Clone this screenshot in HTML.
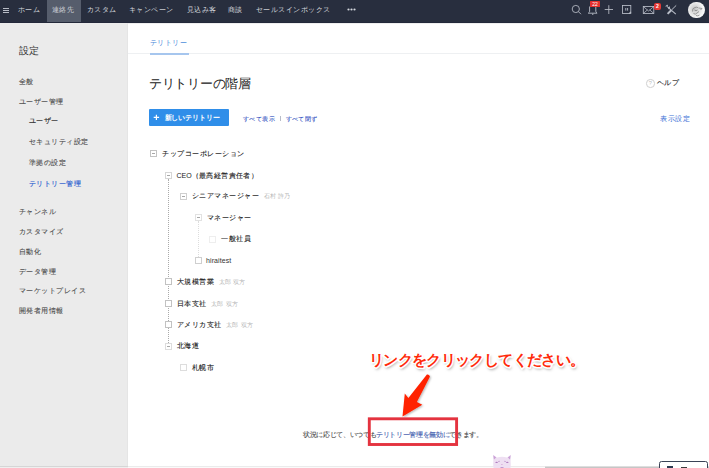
<!DOCTYPE html>
<html><head><meta charset="utf-8">
<style>
*{margin:0;padding:0;box-sizing:border-box}
html,body{width:709px;height:468px;overflow:hidden;background:#fff;font-family:"Liberation Sans",sans-serif;color:#333}
.a{position:absolute;white-space:nowrap;line-height:1}
#nav{position:absolute;left:0;top:0;width:709px;height:23px;background:#282e3e;z-index:2;border-bottom:1px solid #23283a}
#nav .t{position:absolute;top:6px;font-size:7px;letter-spacing:0.45px;color:#d3d6dc;line-height:1;white-space:nowrap}
#act{position:absolute;left:47px;top:0;width:34px;height:22px;background:#565d6c}
#side{position:absolute;left:0;top:22px;width:128px;height:446px;background:#ebebeb}
.s{position:absolute;font-size:7px;letter-spacing:0.45px;color:#4d4d4d;-webkit-text-stroke:0.1px #4d4d4d;line-height:1;white-space:nowrap}
.box{position:absolute;width:7px;height:7px;border:1px solid #c2c2c2;background:#fff}
.box.m::after{content:"";position:absolute;left:1px;top:2px;width:3px;height:1px;background:#a8a8a8}
.tr{position:absolute;font-size:7px;letter-spacing:0.5px;color:#1a1a1a;-webkit-text-stroke:0.12px #1a1a1a;line-height:1;white-space:nowrap}
.g{color:#b4b4b4;font-size:6px;margin-left:4.5px;letter-spacing:0.3px;-webkit-text-stroke:0}
.dl{position:absolute;width:0;border-left:1px dotted #aaa}
</style></head><body>
<div id="nav">
  <div id="act"></div>
  <div style="position:absolute;left:3px;top:7.7px;width:6px;height:0.9px;background:#b8bcc6"></div>
  <div style="position:absolute;left:3px;top:9.7px;width:6px;height:0.9px;background:#b8bcc6"></div>
  <div style="position:absolute;left:3px;top:11.7px;width:6px;height:0.9px;background:#b8bcc6"></div>
  <div class="t" style="left:18px">ホーム</div>
  <div class="t" style="left:52px">連絡先</div>
  <div class="t" style="left:87px">カスタム</div>
  <div class="t" style="left:129px">キャンペーン</div>
  <div class="t" style="left:187px">見込み客</div>
  <div class="t" style="left:228px">商談</div>
  <div class="t" style="left:256px">セールスインボックス</div>
  <svg style="position:absolute;left:347px;top:8px" width="10" height="4"><circle cx="1.5" cy="1.5" r="1.1" fill="#d3d6dc"/><circle cx="4.5" cy="1.5" r="1.1" fill="#d3d6dc"/><circle cx="7.5" cy="1.5" r="1.1" fill="#d3d6dc"/></svg>
  <svg style="position:absolute;left:560px;top:0" width="149" height="22" fill="none" stroke="#b9bec8" stroke-width="0.85">
    <!-- search -->
    <circle cx="15.8" cy="9" r="3.6"/><path d="M18.5 11.7 L21 14.2"/>
    <!-- bell -->
    <path d="M29.6 6.5 L29.6 11.3 Q29.6 12.3 28.3 13.2 L37.1 13.2 Q35.8 12.3 35.8 11.3 L35.8 6.5" stroke-width="0.9"/><path d="M32 14.2 L33.4 14.2" stroke-width="1"/>
    <!-- plus -->
    <path d="M44.7 9.5 L53 9.5 M48.8 5.2 L48.8 14"/>
    <!-- note -->
    <rect x="62.5" y="5.5" width="8.3" height="8"/><path d="M65.8 8 L65.8 10.6 M67.6 8 L67.6 10.6" stroke-width="0.9"/><path d="M69.2 13.6 L70.9 11.9" stroke-width="1.2"/>
    <!-- mail -->
    <rect x="83.3" y="6.5" width="10.5" height="7"/><path d="M83.3 6.5 L88.55 11 L93.8 6.5 M83.3 13.5 L87.5 9.8 M93.8 13.5 L89.6 9.8" stroke-width="0.75"/>
    <!-- tools -->
    <path d="M107.8 7.2 L115.8 14.2" stroke-width="1.1"/><path d="M106 6.8 Q105.8 5 107.6 5.2 L107.2 6.6 L108.4 7.6 L109.5 6.8 Q110 8.8 108.2 8.8" stroke-width="0.9"/>
    <path d="M116.2 5.4 L111.5 10" stroke-width="1"/><path d="M111.2 10.3 L107.6 13.9" stroke-width="2"/>
  </svg>
  <div style="position:absolute;left:589.8px;top:1px;width:10.2px;height:6.2px;background:#e5302c;border-radius:0.5px;color:#fff;font-size:5px;line-height:6.2px;text-align:center;letter-spacing:-0.2px">22</div>
  <div style="position:absolute;left:654px;top:2.5px;width:7px;height:7px;background:#e53935;border-radius:2px;color:#fff;font-size:5px;font-weight:bold;line-height:7px;text-align:center">2</div>
  <div style="position:absolute;left:688.3px;top:1.8px;width:16.5px;height:16.5px;border-radius:50%;background:radial-gradient(circle at 40% 45%,#c4c4c4 0,#dcdcdc 30%,#f4f4f4 60%,#fdfdfd 80%)"></div><svg style="position:absolute;left:688px;top:2px" width="17" height="17" fill="none" stroke="#7a7a7a" stroke-width="0.7"><path d="M4.5 9.5 Q4 6 7 5.5 Q9 4.5 10.5 6 M5.5 11.5 Q7.5 13 9 11 L11 9.5 M6.5 8 Q8 9.5 9.5 8 M11 6 L14 6.5 L12.5 8 M8 13.5 Q10 14.5 11.5 13" /></svg>
</div>
<div style="position:absolute;left:0;top:23px;width:709px;height:1px;background:#eeeeee"></div>
<div id="side">
  <div class="s" style="left:19px;top:23.5px;letter-spacing:0;font-size:10px;color:#333;-webkit-text-stroke:0">設定</div>
  <div class="s" style="left:19px;top:56px">全般</div>
  <div class="s" style="left:19px;top:76px">ユーザー管理</div>
  <div class="s" style="left:29px;top:95px;letter-spacing:0.3px;color:#2e2e2e;-webkit-text-stroke:0.15px #2e2e2e">ユーザー</div>
  <div class="s" style="left:29px;top:116px">セキュリティ設定</div>
  <div class="s" style="left:29px;top:137px">準拠の設定</div>
  <div class="s" style="left:29px;top:158px;color:#2f62d0;-webkit-text-stroke:0.15px #2f62d0">テリトリー管理</div>
  <div class="s" style="left:19px;top:186px">チャンネル</div>
  <div class="s" style="left:19px;top:206px">カスタマイズ</div>
  <div class="s" style="left:19px;top:226px">自動化</div>
  <div class="s" style="left:19px;top:246px">データ管理</div>
  <div class="s" style="left:19px;top:265px">マーケットプレイス</div>
  <div class="s" style="left:19px;top:285px">開発者用情報</div>
</div>
<!-- main -->
<div class="a" style="left:150px;top:39px;font-size:7px;letter-spacing:0.4px;color:#4486d8">テリトリー</div>
<div style="position:absolute;left:128px;top:53.2px;width:581px;height:1px;background:#eef0f2"></div>
<div style="position:absolute;left:150px;top:53px;width:39px;height:1.6px;background:#a6c6ee"></div>
<div class="a" style="left:149px;top:77px;font-size:13px;letter-spacing:-0.3px;color:#222">テリトリーの階層</div>
<div style="position:absolute;left:646px;top:79px;width:8.5px;height:8.5px;border:1px solid #d0d0d0;border-radius:50%;font-size:5.5px;color:#bbb;text-align:center;line-height:6.5px">?</div>
<div class="a" style="left:657px;top:79px;font-size:7px;letter-spacing:0.3px;color:#222;-webkit-text-stroke:0.12px #222">ヘルプ</div>
<div style="position:absolute;left:149px;top:109px;width:80px;height:17px;background:#2f8ee9;border-radius:1px"></div>
<svg style="position:absolute;left:150px;top:110px" width="12" height="14"><path d="M3.7 7.3 L9.1 7.3 M6.4 4.8 L6.4 10" stroke="#fff" stroke-width="1.2"/></svg>
<div class="a" style="left:164.5px;top:113.5px;font-size:7px;letter-spacing:-0.12px;color:#fff;font-weight:bold">新しいテリトリー</div>
<div class="a" style="left:243px;top:115.5px;font-size:6px;letter-spacing:0.4px;color:#3451c2;-webkit-text-stroke:0.1px #3451c2">すべて表示</div>
<div class="a" style="left:279.8px;top:115.5px;width:0.8px;height:5.5px;background:#b8bcc8"></div>
<div class="a" style="left:285.5px;top:115.5px;font-size:6px;letter-spacing:0.4px;color:#3451c2;-webkit-text-stroke:0.1px #3451c2">すべて閉ず</div>
<div class="a" style="left:660px;top:114.5px;font-size:7px;letter-spacing:0.5px;color:#3b6fd6">表示設定</div>

<!-- tree -->
<div class="box m" style="left:150px;top:150px"></div>
<div class="tr" style="left:162px;top:150px">チップコーポレーション</div>
<div class="box m" style="left:165px;top:172px;border-color:#d6d6d6"></div>
<div class="tr" style="left:176.5px;top:172px;letter-spacing:0.4px"><span style="-webkit-text-stroke:0;color:#222;letter-spacing:0">CEO</span>（最高経営責任者）</div>
<div class="dl" style="left:168px;top:179px;height:164px"></div>
<div class="box m" style="left:180px;top:193px;border-color:#cfcfcf"></div>
<div class="tr" style="left:191.5px;top:192px">シニアマネージャー<span class="g">石村 許乃</span></div>
<div class="box m" style="left:195px;top:214px;border-color:#e2e2e2"></div>
<div class="tr" style="left:206.5px;top:214px">マネージャー</div>
<div class="dl" style="left:198px;top:221px;height:36px;border-color:#ddd"></div>
<div class="box" style="left:209px;top:235.5px;border-color:#eee"></div>
<div class="tr" style="left:221px;top:235px">一般社員</div>
<div class="box" style="left:195px;top:257px;border-color:#cfcfcf"></div>
<div class="tr" style="left:206px;top:256.5px;letter-spacing:0.1px;-webkit-text-stroke:0;color:#333">hiraitest</div>
<div class="box" style="left:165px;top:278px"></div>
<div class="tr" style="left:176.5px;top:278px">大規模営業<span class="g">太郎 双方</span></div>
<div class="box" style="left:165px;top:300px"></div>
<div class="tr" style="left:176.5px;top:299.5px">日本支社<span class="g">太郎 双方</span></div>
<div class="box" style="left:165px;top:321px"></div>
<div class="tr" style="left:176.5px;top:321px">アメリカ支社<span class="g">太郎 双方</span></div>
<div class="box m" style="left:165px;top:342.5px;border-color:#ddd"></div>
<div class="tr" style="left:176.5px;top:342px">北海道</div>
<div class="box" style="left:180px;top:364px;border-color:#ddd"></div>
<div class="tr" style="left:191.5px;top:363.5px">札幌市</div>

<!-- footer text -->
<div class="a" style="left:303px;top:430.5px;font-size:7px;letter-spacing:-0.35px;color:#484848;-webkit-text-stroke:0.1px #484848">状況に応じて、いつでも<span style="color:#3f5cae;-webkit-text-stroke:0.1px #3f5cae">テリトリー管理を無効に</span>できます。</div>

<!-- annotation -->
<div class="a" style="left:369px;top:352px;font-size:15px;letter-spacing:-0.65px;font-weight:bold;color:#fff;-webkit-text-stroke:3px #fff;text-shadow:1px 2px 3px rgba(0,0,0,.5)">リンクをクリックしてください。</div>
<div class="a" style="left:369px;top:352px;font-size:15px;letter-spacing:-0.65px;font-weight:bold;color:#ff2a0a">リンクをクリックしてください。</div>
<svg style="position:absolute;left:0;top:0" width="709" height="468">
  <defs><filter id="sh" x="-50%" y="-50%" width="200%" height="200%"><feGaussianBlur in="SourceAlpha" stdDeviation="0.8"/><feOffset dx="0.8" dy="1" result="b"/><feFlood flood-color="#000" flood-opacity="0.3"/><feComposite in2="b" operator="in"/><feMerge><feMergeNode/><feMergeNode in="SourceGraphic"/></feMerge></filter></defs>
  <path filter="url(#sh)" d="M426.9 374.6 Q428.6 373.9 429.8 376 Q430 376.8 429.5 377.5 L416.9 402.1 L422.3 404.8 L402.5 416.6 L404.8 393.5 L408.4 398 Z" fill="#ff2200"/>
  <rect x="369.3" y="418.8" width="87.3" height="25.7" fill="none" stroke="#e4333f" stroke-width="2.9"/>
</svg>

<!-- bottom -->
<div style="position:absolute;left:0;top:466px;width:128px;height:1px;background:#d6d6d6"></div>
<div style="position:absolute;left:0;top:467px;width:128px;height:1px;background:#efefef"></div>
<div style="position:absolute;left:128px;top:466px;width:417px;height:1px;background:#ebebeb"></div>
<div style="position:absolute;left:128px;top:467px;width:417px;height:1px;background:#fafafa"></div>
<div style="position:absolute;left:545px;top:466px;width:164px;height:1px;background:#dedede"></div>
<div style="position:absolute;left:545px;top:467px;width:164px;height:1px;background:#c6c6c6"></div>
<div style="position:absolute;left:127px;top:22px;width:1px;height:444px;background:#e5e5e5"></div>
<svg style="position:absolute;left:488px;top:450px" width="28" height="18">
  <path d="M5 4.8 L9 7.4 Q14 6.3 19 7.4 L22.9 4.8 L22.6 11 Q23 16 22.4 18 L5.6 18 Q5 16 5.3 11 Z" fill="#eedff2"/>
  <path d="M5.3 5.2 L8.2 7.6 L6 9.5 Z M22.6 5.2 L19.8 7.6 L22 9.5 Z" fill="#c9a0d6"/>
  <ellipse cx="8.6" cy="12.4" rx="1.2" ry="0.6" fill="#b07cc0"/><ellipse cx="19.3" cy="12.4" rx="1.2" ry="0.6" fill="#b07cc0"/>
  <path d="M10 11.5 L12 11.3 M16 11.3 L18 11.5" stroke="#b98cc8" stroke-width="0.6"/>
  <ellipse cx="13.9" cy="14.5" rx="0.8" ry="0.5" fill="#d6a8d8"/>
  <path d="M12.5 17.6 L15.5 17.6" stroke="#b07cc0" stroke-width="0.8"/>
</svg>
<div style="position:absolute;left:659.3px;top:460.7px;width:49px;height:12px;border:1.2px solid #3a4356;border-radius:2.5px;background:#fff"></div>
<div style="position:absolute;left:667px;top:466px;width:6px;height:2px;background:#2d3a50"></div>
<div style="position:absolute;left:681px;top:466.5px;width:5.5px;height:1.5px;background:#3a3a3a"></div>
</body></html>
